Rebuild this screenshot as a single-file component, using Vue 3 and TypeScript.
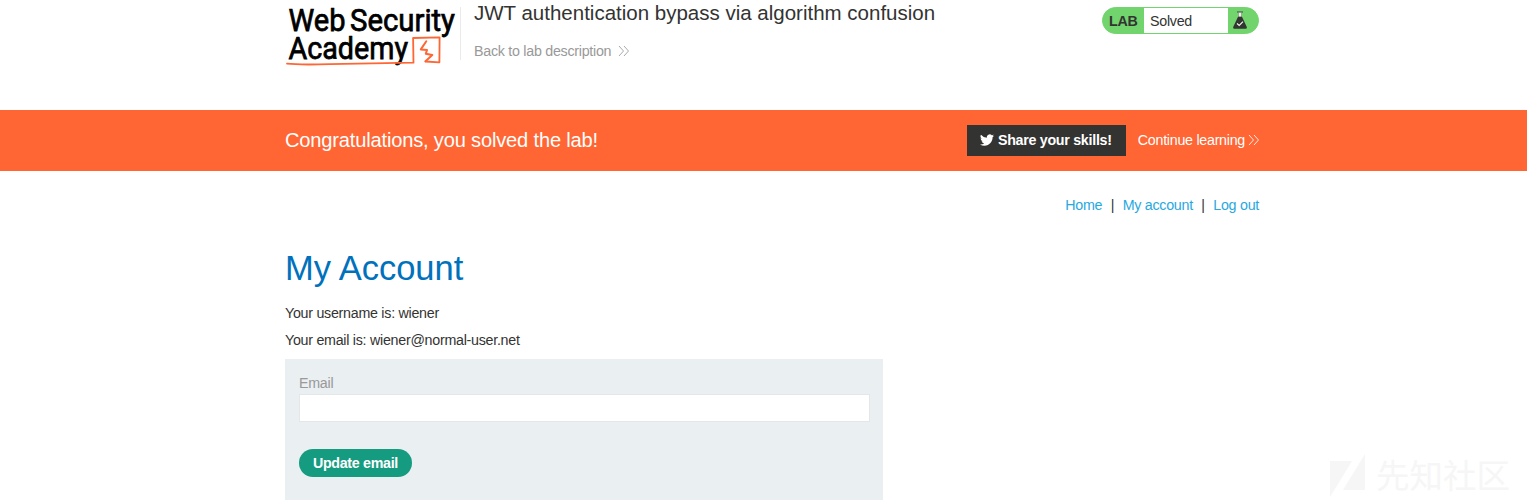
<script setup lang="ts">
import { ref } from 'vue'

const email = ref('')
const links: string[] = ['Home', 'My account', 'Log out']
</script>

<template>
  <div class="page">
    <header class="header wrap">
      <svg class="logo" width="174" height="70" viewBox="0 0 174 70" aria-label="Web Security Academy">
        <g class="logo-text">
          <text x="3.5" y="31" textLength="57" lengthAdjust="spacingAndGlyphs">Web</text>
          <text x="65" y="31" textLength="105" lengthAdjust="spacingAndGlyphs">Security</text>
          <text x="3.5" y="59" textLength="119.500" lengthAdjust="spacingAndGlyphs">Academy</text>
        </g>
        <g fill="none" stroke="#ff6633" stroke-linejoin="round" stroke-linecap="round">
          <path stroke-width="1.800" d="M2 63.700 Q13 65 45 64.200 L128.500 62.700 L128.100 38 L154.600 37.300 L154.400 62.300 L140.500 61.500" />
          <path stroke-width="2" d="M140.500 61.300 L147.300 55 L140.800 53.800 L142 50 L135.800 49.400 L141.300 41.300" />
        </g>
      </svg>
      <div class="title">
        <h2>JWT authentication bypass via algorithm confusion</h2>
        <a class="back">Back to lab description
          <svg width="12" height="12" viewBox="0 0 12 12"><path d="M1 1 L5.500 6 L1 11 M6 1 L10.500 6 L6 11" fill="none" stroke="currentColor" stroke-width=".85" /></svg>
        </a>
      </div>
      <div class="status">
        <b>LAB</b><span>Solved</span>
        <i>
          <svg width="16" height="18" viewBox="0 0 16 18">
            <path d="M5 1 H11" stroke="#444" stroke-width="1" />
            <path d="M6.500 1.500 H9.500 V6 H6.500Z" fill="#e8f5e6" stroke="#777" stroke-width=".5" />
            <path d="M6 5.800 H10 L14.800 16 Q15.300 17.800 13.800 17.800 H2.200 Q.7 17.800 1.200 16Z" fill="#333332" />
            <path d="M5 12.500 L7.200 14.500 L11 10.700" fill="none" stroke="#eaf8e8" stroke-width="1.200" />
          </svg>
        </i>
      </div>
    </header>

    <section class="banner">
      <div class="wrap banner-row">
        <h4>Congratulations, you solved the lab!</h4>
        <button class="share" type="button">
          <svg width="14" height="12" viewBox="0 2 24 20"><path fill="#fff" d="M24 4.560a9.800 9.800 0 0 1-2.830.77 4.930 4.930 0 0 0 2.170-2.720 9.900 9.900 0 0 1-3.130 1.190 4.920 4.920 0 0 0-8.380 4.480A13.970 13.970 0 0 1 1.670 3.150a4.930 4.930 0 0 0 1.520 6.570 4.900 4.900 0 0 1-2.230-.61v.06a4.920 4.920 0 0 0 3.950 4.830 4.900 4.900 0 0 1-2.220.08 4.930 4.930 0 0 0 4.600 3.420A9.870 9.870 0 0 1 0 19.540a13.940 13.940 0 0 0 7.550 2.210c9.050 0 14-7.500 14-13.980 0-.21 0-.43-.02-.64A10 10 0 0 0 24 4.560z" /></svg>
          Share your skills!
        </button>
        <a class="continue">Continue learning
          <svg width="12" height="12" viewBox="0 0 12 12"><path d="M1 1 L5.500 6 L1 11 M6 1 L10.500 6 L6 11" fill="none" stroke="currentColor" stroke-width=".85" /></svg>
        </a>
      </div>
    </section>

    <main class="wrap">
      <nav>
        <template v-for="(link, index) in links" :key="link">
          <span v-if="index > 0">|</span>
          <a>{{ link }}</a>
        </template>
      </nav>
      <h1>My Account</h1>
      <p>Your username is: wiener</p>
      <p>Your email is: wiener@normal-user.net</p>
      <form @submit.prevent>
        <label for="email">Email</label>
        <input id="email" v-model="email" type="email">
        <button type="submit">Update email</button>
      </form>
    </main>

    <div class="watermark">
      <svg width="36" height="44" viewBox="0 0 36 44"><path d="M0 7 H22 L0 43Z M35 0 V36 H13Z" fill="#f6f6f6" /></svg>
      <span>先知社区</span>
    </div>
  </div>
</template>

<style>
body { margin: 0; background: #fff; }
</style>

<style scoped>
.page {
  position: relative;
  height: 500px;
  overflow: hidden;
  color: #333332;
  font: 14.250px/18px "Liberation Sans", Arial, sans-serif;
  letter-spacing: -.265px;
}
.wrap { width: 974px; margin: 0 auto 0 285px; }
h1, h2, h4, p { margin: 0; font-weight: 400; }
h1, h2, h4 { letter-spacing: 0; }
.header { display: flex; align-items: flex-start; height: 109.600px; }
.logo { flex: none; overflow: visible; }
.logo-text { font: 400 31.500px Roboto, sans-serif; letter-spacing: 0; fill: #000; stroke: #000; stroke-width: .75px; }
.title {
  box-sizing: border-box;
  height: 53px;
  margin-top: 7px;
  margin-left: 1px;
  padding-left: 14px;
  position: relative;
}
.title::before {
  content: "";
  position: absolute;
  left: 0;
  top: 0;
  width: 1px;
  height: 53px;
  background: #ebebeb;
}
h2 { margin-top: -6px; font-size: 20.500px; line-height: 24px; white-space: nowrap; }
.back { display: flex; align-items: center; gap: 7px; margin-top: 17px; color: #999; }
.status {
  display: flex;
  box-sizing: border-box;
  width: 157px;
  height: 27px;
  margin: 7px 0 0 auto;
  border: 1px solid #71d46d;
  border-radius: 14px;
  overflow: hidden;
  background: #71d46d;
  line-height: 26px;
}
.status b { width: 41px; padding-left: 6px; box-sizing: border-box; letter-spacing: -.2px; }
.status span { width: 84px; padding-left: 6px; box-sizing: border-box; background: #fff; }
.status i { padding: 3px 0 0 4px; line-height: 0; }
.banner { height: 61.400px; background: #ff6633; color: #fff; }
.banner-row { display: flex; align-items: center; height: 61px; }
h4 { flex: 1; font-size: 20.100px; letter-spacing: -.18px; line-height: 24px; }
.share {
  display: flex;
  align-items: center;
  justify-content: center;
  gap: 4px;
  width: 159px;
  height: 31px;
  padding: 0 1px 0 0;
  box-sizing: border-box;
  border: 0;
  background: #333332;
  color: #fff;
  font: bold 14.250px "Liberation Sans", Arial, sans-serif;
  letter-spacing: -.28px;
}
.continue { display: flex; align-items: center; gap: 3px; margin: 0 -1px 0 12px; }
nav { display: flex; justify-content: flex-end; gap: 8.500px; padding-top: 25px; }
nav a { color: #29a8e0; }
h1 { margin-top: 34px; font-size: 34.500px; line-height: 40px; color: #0071bc; }
p { line-height: 18px; }
h1 + p { margin-top: 16px; }
p + p { margin-top: 9px; }
form {
  display: flex;
  flex-direction: column;
  align-items: flex-start;
  box-sizing: border-box;
  width: 598px;
  height: 160px;
  margin-top: 10px;
  padding: 15px 14px;
  background: #eaeff2;
}
label { color: #999; }
input {
  box-sizing: border-box;
  width: 571px;
  height: 28px;
  margin-top: 2px;
  border: 1px solid #e4e7e8;
  background: #fff;
  outline: 0;
}
form button {
  width: 113px;
  height: 28px;
  margin-top: 27px;
  padding: 0;
  border: 0;
  border-radius: 14px;
  background: #159b80;
  color: #fff;
  font: bold 14.250px "Liberation Sans", Arial, sans-serif;
  letter-spacing: -.3px;
}
.watermark {
  position: absolute;
  left: 1330px;
  top: 454px;
  display: flex;
  gap: 10px;
  color: #f6f6f6;
  font: 33.500px/44px "Noto Sans CJK SC", sans-serif;
  letter-spacing: 0;
}
.watermark span { margin-top: -2px; }
</style>
